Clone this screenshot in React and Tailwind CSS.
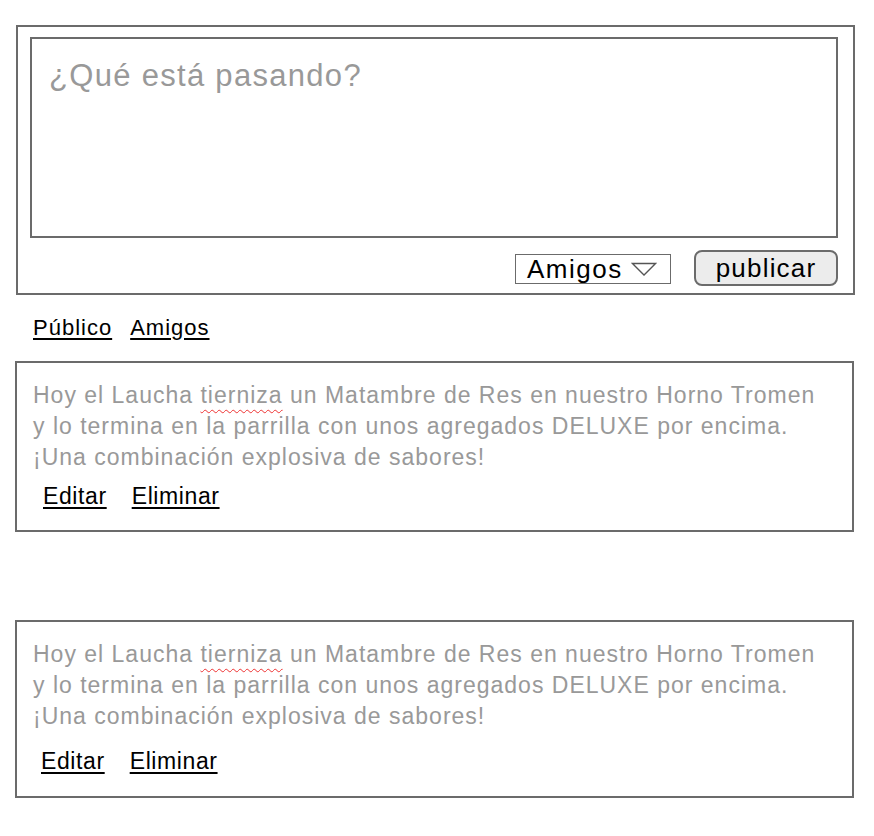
import React from "react";

const POST =
  "y lo termina en la parrilla con unos agregados DELUXE por encima.";

const Post = ({ className, actionsClass }) => {
  return (
    <div className={"border-2 border-[#6b6b6b] w-[839px] " + className}>
      <p className="text-[23px] tracking-[1px] leading-[31px] text-[#999999]">
        Hoy el Laucha{" "}
        <span className="underline decoration-wavy decoration-[#e33] decoration-1 underline-offset-[6px]">
          tierniza
        </span>{" "}
        un Matambre de Res en nuestro Horno Tromen
        <br />
        {POST}
        <br />
        ¡Una combinación explosiva de sabores!
      </p>
      <div className={"flex gap-[25px] text-[23px] tracking-[0.6px] leading-[28px] text-black " + actionsClass}>
        <a href="#" className="underline underline-offset-[3px]">Editar</a>
        <a href="#" className="underline underline-offset-[3px]">Eliminar</a>
      </div>
    </div>
  );
};

export default function App() {
  return (
    <div
      className="bg-white min-h-[836px] w-[874px] pt-[25px] pl-[16px]"
      style={{ fontFamily: '"Liberation Sans", Arial, sans-serif' }}
    >
      <div className="border-2 border-[#6b6b6b] w-[839px] h-[270px] pt-[10px] pl-[12px] pr-[15px]">
        <div className="border-2 border-[#6b6b6b] h-[201px] px-[17px] pt-[19px]">
          <p className="text-[31px] tracking-[1.3px] leading-[36px] text-[#999999]">¿Qué está pasando?</p>
        </div>
        <div className="flex justify-end items-center mt-[13px] gap-[23px]">
          <div className="flex items-center border border-[#6b6b6b] w-[156px] h-[30px] pl-[11px] text-[26px] tracking-[1.5px] text-black">
            <span className="leading-none">Amigos</span>
            <svg width="26" height="16" viewBox="0 0 26 16" className="ml-[8px]">
              <path d="M1.5 2.5 L24.5 2.5 L13 14 Z" fill="none" stroke="#555" strokeWidth="1.3" />
            </svg>
          </div>
          <button className="w-[144px] h-[36px] -mt-[1px] rounded-[8px] border-2 border-[#6b6b6b] bg-[#ececec] text-[26px] tracking-[1.2px] text-black leading-none">
            publicar
          </button>
        </div>
      </div>

      <div className="flex gap-[18px] pl-[17px] mt-[20px] text-[22px] tracking-[1px] text-black leading-[26px]">
        <a href="#" className="underline underline-offset-[3px]">Público</a>
        <a href="#" className="underline underline-offset-[3px]">Amigos</a>
      </div>

      <Post className="-ml-[1px] mt-[20px] h-[171px] pl-[16px] pt-[17px]" actionsClass="pl-[10px] mt-[9px]" />
      <Post className="-ml-[1px] mt-[88px] h-[178px] pl-[16px] pt-[17px]" actionsClass="pl-[8px] mt-[15px]" />
    </div>
  );
}
